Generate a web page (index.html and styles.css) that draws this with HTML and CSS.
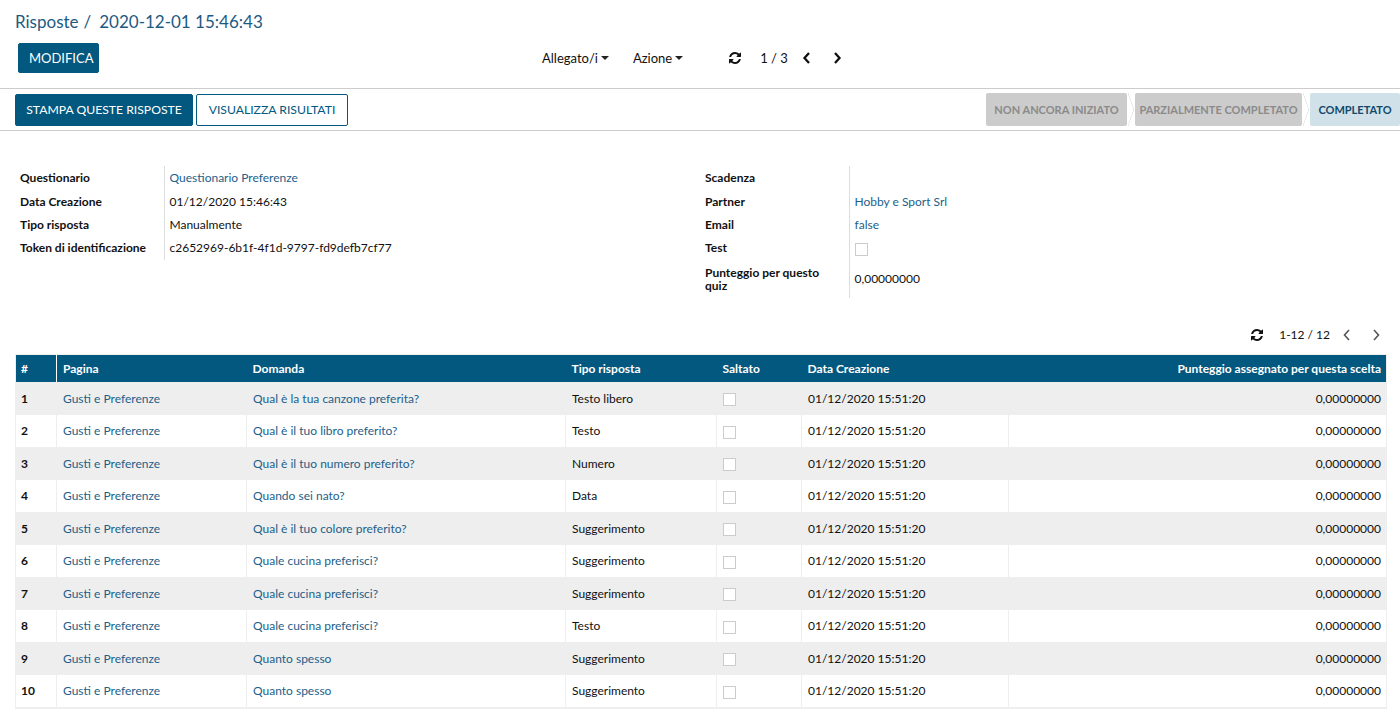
FILE: index.html
```html
<!DOCTYPE html>
<html lang="it">
<head>
<meta charset="utf-8">
<title>Risposte</title>
<link rel="stylesheet" href="styles.css">
</head>
<body>
<div class="cp">
  <div class="breadcrumb"><span class="bc-root">Risposte</span><span class="bc-sep">/</span><span class="bc-cur">2020-12-01 15:46:43</span></div>
  <div class="cp-row">
    <div class="cp-left"><button class="btn btn-primary btn-edit">MODIFICA</button></div>
    <div class="cp-sidebar">
      <span class="dd">Allegato/i<i class="caret"></i></span>
      <span class="dd">Azione<i class="caret"></i></span>
    </div>
    <div class="pager">
      <svg class="ico-refresh" viewBox="128 128 1536 1536"><path d="M1639 1056q0 5-1 7-64 268-268 434.5t-478 166.5q-146 0-282.5-55t-243.5-157l-129 129q-19 19-45 19t-45-19-19-45v-448q0-26 19-45t45-19h448q26 0 45 19t19 45-19 45l-137 137q71 66 161 102t187 36q134 0 250-65t186-179q11-17 53-117 8-23 30-23h192q13 0 22.5 9.5t9.5 22.5zm25-800v448q0 26-19 45t-45 19h-448q-26 0-45-19t-19-45 19-45l138-138q-148-137-349-137-134 0-250 65t-186 179q-11 17-53 117-8 23-30 23h-199q-13 0-22.5-9.5t-9.5-22.5v-7q65-268 270-434.5t480-166.5q146 0 284 55.5t245 156.5l130-129q19-19 45-19t45 19 19 45z"/></svg>
      <span class="pager-val">1 / 3</span>
      <svg class="chev" viewBox="0 0 10 14"><polyline points="7,2 2.5,7 7,12"/></svg>
      <svg class="chev" viewBox="0 0 10 14"><polyline points="3,2 7.5,7 3,12"/></svg>
    </div>
  </div>
</div>

<div class="statusbar">
  <div class="sb-buttons">
    <button class="btn btn-primary">STAMPA QUESTE RISPOSTE</button>
    <button class="btn btn-secondary">VISUALIZZA RISULTATI</button>
  </div>
  <div class="sb-steps">
    <span class="step">NON ANCORA INIZIATO</span>
    <span class="step">PARZIALMENTE COMPLETATO</span>
    <span class="step active">COMPLETATO</span>
  </div>
</div>

<div class="sheet">
  <div class="groups">
    <table class="grp grp-left">
      <tr><td class="lbl">Questionario</td><td class="val"><a>Questionario Preferenze</a></td></tr>
      <tr><td class="lbl">Data Creazione</td><td class="val">01/12/2020 15:46:43</td></tr>
      <tr><td class="lbl">Tipo risposta</td><td class="val">Manualmente</td></tr>
      <tr><td class="lbl">Token di identificazione</td><td class="val">c2652969-6b1f-4f1d-9797-fd9defb7cf77</td></tr>
    </table>
    <table class="grp grp-right">
      <tr><td class="lbl">Scadenza</td><td class="val"></td></tr>
      <tr><td class="lbl">Partner</td><td class="val"><a>Hobby e Sport Srl</a></td></tr>
      <tr><td class="lbl">Email</td><td class="val"><a>false</a></td></tr>
      <tr><td class="lbl">Test</td><td class="val"><span class="cb"></span></td></tr>
      <tr><td class="lbl">Punteggio per questo quiz</td><td class="val">0,00000000</td></tr>
    </table>
  </div>

  <div class="list-pager">
    <svg class="ico-refresh" viewBox="128 128 1536 1536"><path d="M1639 1056q0 5-1 7-64 268-268 434.5t-478 166.5q-146 0-282.5-55t-243.5-157l-129 129q-19 19-45 19t-45-19-19-45v-448q0-26 19-45t45-19h448q26 0 45 19t19 45-19 45l-137 137q71 66 161 102t187 36q134 0 250-65t186-179q11-17 53-117 8-23 30-23h192q13 0 22.5 9.5t9.5 22.5zm25-800v448q0 26-19 45t-45 19h-448q-26 0-45-19t-19-45 19-45l138-138q-148-137-349-137-134 0-250 65t-186 179q-11 17-53 117-8 23-30 23h-199q-13 0-22.5-9.5t-9.5-22.5v-7q65-268 270-434.5t480-166.5q146 0 284 55.5t245 156.5l130-129q19-19 45-19t45 19 19 45z"/></svg>
    <span class="pager-val">1-12 / 12</span>
    <svg class="chev light" viewBox="0 0 10 14"><polyline points="7,2 2.5,7 7,12"/></svg>
    <svg class="chev light" viewBox="0 0 10 14"><polyline points="3,2 7.5,7 3,12"/></svg>
  </div>

  <table class="list">
    <colgroup>
      <col class="c-num"><col class="c-page"><col class="c-q"><col class="c-type"><col class="c-skip"><col class="c-date"><col>
    </colgroup>
    <thead>
      <tr><th class="hnum">#</th><th>Pagina</th><th>Domanda</th><th>Tipo risposta</th><th>Saltato</th><th>Data Creazione</th><th class="num">Punteggio assegnato per questa scelta</th></tr>
    </thead>
    <tbody>
      <tr><td class="n">1</td><td><a>Gusti e Preferenze</a></td><td><a>Qual è la tua canzone preferita?</a></td><td>Testo libero</td><td><span class="cb"></span></td><td>01/12/2020 15:51:20</td><td class="num">0,00000000</td></tr>
      <tr><td class="n">2</td><td><a>Gusti e Preferenze</a></td><td><a>Qual è il tuo libro preferito?</a></td><td>Testo</td><td><span class="cb"></span></td><td>01/12/2020 15:51:20</td><td class="num">0,00000000</td></tr>
      <tr><td class="n">3</td><td><a>Gusti e Preferenze</a></td><td><a>Qual è il tuo numero preferito?</a></td><td>Numero</td><td><span class="cb"></span></td><td>01/12/2020 15:51:20</td><td class="num">0,00000000</td></tr>
      <tr><td class="n">4</td><td><a>Gusti e Preferenze</a></td><td><a>Quando sei nato?</a></td><td>Data</td><td><span class="cb"></span></td><td>01/12/2020 15:51:20</td><td class="num">0,00000000</td></tr>
      <tr><td class="n">5</td><td><a>Gusti e Preferenze</a></td><td><a>Qual è il tuo colore preferito?</a></td><td>Suggerimento</td><td><span class="cb"></span></td><td>01/12/2020 15:51:20</td><td class="num">0,00000000</td></tr>
      <tr><td class="n">6</td><td><a>Gusti e Preferenze</a></td><td><a>Quale cucina preferisci?</a></td><td>Suggerimento</td><td><span class="cb"></span></td><td>01/12/2020 15:51:20</td><td class="num">0,00000000</td></tr>
      <tr><td class="n">7</td><td><a>Gusti e Preferenze</a></td><td><a>Quale cucina preferisci?</a></td><td>Suggerimento</td><td><span class="cb"></span></td><td>01/12/2020 15:51:20</td><td class="num">0,00000000</td></tr>
      <tr><td class="n">8</td><td><a>Gusti e Preferenze</a></td><td><a>Quale cucina preferisci?</a></td><td>Testo</td><td><span class="cb"></span></td><td>01/12/2020 15:51:20</td><td class="num">0,00000000</td></tr>
      <tr><td class="n">9</td><td><a>Gusti e Preferenze</a></td><td><a>Quanto spesso</a></td><td>Suggerimento</td><td><span class="cb"></span></td><td>01/12/2020 15:51:20</td><td class="num">0,00000000</td></tr>
      <tr><td class="n">10</td><td><a>Gusti e Preferenze</a></td><td><a>Quanto spesso</a></td><td>Suggerimento</td><td><span class="cb"></span></td><td>01/12/2020 15:51:20</td><td class="num">0,00000000</td></tr>
      <tr><td class="n">11</td><td><a>Gusti e Preferenze</a></td><td><a>Quanto spesso</a></td><td>Suggerimento</td><td><span class="cb"></span></td><td>01/12/2020 15:51:20</td><td class="num">0,00000000</td></tr>
      <tr><td class="n">12</td><td><a>Gusti e Preferenze</a></td><td><a>Quanto spesso</a></td><td>Suggerimento</td><td><span class="cb"></span></td><td>01/12/2020 15:51:20</td><td class="num">0,00000000</td></tr>
    </tbody>
  </table>
</div>
</body>
</html>
```

FILE: styles.css
```css
* { box-sizing: border-box; }
html, body { margin: 0; padding: 0; background: #fff; }
body {
  font-family: "Lato", "Noto Sans", sans-serif;
  font-size: 12px;
  color: #111;
  overflow: hidden;
}
a { color: #1d5f8a; text-decoration: none; }

.cp { padding: 10px 15px 0 15px; height: 89px; border-bottom: 1px solid #ccc; }
.breadcrumb { font-size: 17px; line-height: 24px; color: #1d5a82; }
.bc-sep { margin: 0 8px 0 5px; }
.cp-row { display: flex; align-items: center; margin-top: 9px; height: 30px; }
.cp-left { flex: 0 0 527px; padding-left: 3px; }
.btn {
  font-family: inherit; font-size: 13px; height: 30px; padding: 0 10px;
  border-radius: 2px; border: 1px solid transparent; cursor: pointer;
}
.btn-primary { background: #02587f; color: #fff; border-color: #02587f; }
.btn-secondary { background: #fff; color: #02587f; border-color: #02587f; }
.btn-edit { width: 81px; }

.cp-sidebar { display: flex; gap: 24px; font-size: 13px; color: #111; }
.dd { display: inline-flex; align-items: center; }
.caret {
  display: inline-block; width: 0; height: 0; margin-left: 3px;
  border-left: 4px solid transparent; border-right: 4px solid transparent; border-top: 4px solid #222;
}
.pager { display: flex; align-items: center; margin-left: 46px; font-size: 13px; }
.ico-refresh { width: 12px; height: 12px; fill: #111; }
.pager-val { margin-left: 19px; margin-right: 14px; }
.chev { width: 10px; height: 14px; fill: none; stroke: #111; stroke-width: 2.3; margin-right: 20px; }
.chev.light { stroke: #555; stroke-width: 1.6; margin-right: 18px; }

.statusbar {
  display: flex; justify-content: space-between; align-items: center;
  height: 42px; border-bottom: 1px solid #ccc; padding-left: 15px;
}
.sb-buttons { display: flex; gap: 3px; }
.sb-buttons .btn { height: 32px; padding: 0 10px; font-size: 12.2px; }
.sb-buttons .btn-primary { width: 178px; padding: 0; }
.sb-buttons .btn-secondary { width: 152px; padding: 0; }
.sb-steps { display: flex; align-self: stretch; align-items: center; gap: 8px; }
.step {
  position: relative; height: 33px; line-height: 33px; padding: 0;
  background: #cccccc; color: #8a8a8a; font-weight: 700; font-size: 11px; border-radius: 2px;
  text-align: center;
}
.step:nth-child(1) { width: 141px; }
.step:nth-child(2) { width: 167px; }
.step + .step::before {
  content: ""; position: absolute; left: -7px; top: 0; width: 6px; height: 17px;
  background: linear-gradient(to top right, transparent calc(50% - 0.6px), #e0e0e0 50%, transparent calc(50% + 0.6px));
}
.step + .step::after {
  content: ""; position: absolute; left: -7px; top: 16px; width: 6px; height: 17px;
  background: linear-gradient(to bottom right, transparent calc(50% - 0.6px), #e0e0e0 50%, transparent calc(50% + 0.6px));
}
.step.active { background: #d0e1e9; color: #12496b; width: 90px; }

.sheet { padding: 0 13px 0 15px; }
.groups { display: flex; align-items: flex-start; padding-top: 35px; }
.grp { border-collapse: collapse; }
.grp-left { width: 685px; }
.grp-right { width: 500px; }
.grp td { padding: 0; vertical-align: middle; }
.grp .lbl { font-weight: 700; padding: 0 5px; border-right: 1px solid #ddd; width: 149px; line-height: 13px; }
.grp .val { padding-left: 5px; }
.grp tr { height: 23.4px; }
.grp-right tr:last-child { height: 38px; }

.cb { display: inline-block; width: 13px; height: 13px; border: 1px solid #ccc; background: #fff; vertical-align: middle; }

.list-pager { display: flex; justify-content: flex-end; align-items: center; height: 22px; margin-top: 26px; margin-right: -13px; font-size: 12px; }
.list-pager .pager-val { margin-left: 16px; margin-right: 12px; }
.list-pager .chev { margin-right: 19px; }

.list { width: 100%; border-collapse: collapse; table-layout: fixed; margin-top: 8px; border: 1px solid #eee; }
.c-num { width: 41px; }
.c-page { width: 190px; }
.c-q { width: 319px; }
.c-type { width: 151px; }
.c-skip { width: 85px; }
.c-date { width: 207px; }
.list th {
  background: #02587f; color: #fff; font-weight: 700; text-align: left;
  height: 28px; padding: 0 6px; font-size: 12px;
}
.list th.hnum { border-right: 1px solid #fff; padding-left: 5px; }
.list td { height: 32.5px; padding: 0 6px; border-left: 1px solid #eee; vertical-align: middle; white-space: nowrap; overflow: hidden; }
.list td:first-child { border-left: none; }
.list tbody tr:nth-child(odd) td { background: #eeeeee; }
.list td.n { font-weight: 700; padding-left: 5px; }
.list .num { text-align: right; padding-right: 5px; }
```
